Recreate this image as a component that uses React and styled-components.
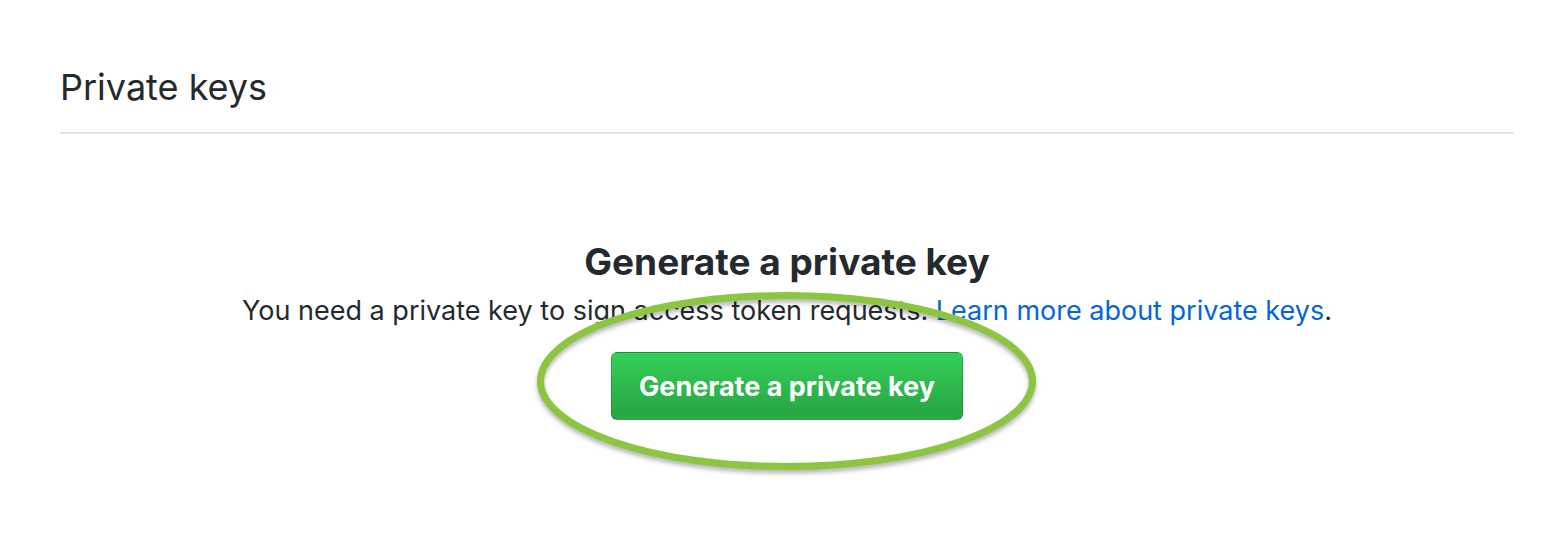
import styled, { createGlobalStyle } from "styled-components";

const GlobalStyle = createGlobalStyle`
  html, body {
    margin: 0;
    background: #fff;
    font-family: Inter, "Liberation Sans", Arial, sans-serif;
    color: #24292e;
  }
`;

function App() {
  return (
    <>
      <GlobalStyle />
      <Page>
        <Subhead>
          <SubheadTitle>Private keys</SubheadTitle>
        </Subhead>
        <Blankslate>
          <BlankTitle>Generate a private key</BlankTitle>
          <BlankText>
            You need a private key to sign access token requests.{" "}
            <Link href="#">Learn more about private keys</Link>.
          </BlankText>
          <ButtonWrap>
            <PrimaryButton type="button">Generate a private key</PrimaryButton>
            <Highlight viewBox="0 0 511 195" width="511" height="195">
              <defs>
                <filter id="ring-shadow" x="-5%" y="-10%" width="110%" height="125%">
                  <feGaussianBlur stdDeviation="2" />
                </filter>
              </defs>
              <ellipse
                cx="255.5"
                cy="92.5"
                rx="246"
                ry="85.5"
                fill="none"
                stroke="rgba(0,0,0,0.28)"
                strokeWidth="7"
                filter="url(#ring-shadow)"
              />
              <ellipse
                cx="255.5"
                cy="89"
                rx="246"
                ry="85.5"
                fill="none"
                stroke="#8cc540"
                strokeWidth="7"
              />
            </Highlight>
          </ButtonWrap>
        </Blankslate>
      </Page>
    </>
  );
}

export default App;

const Page = styled.div`
  min-height: 536px;
  padding: 0 50px 0 60px;
`;

const Subhead = styled.div`
  padding-top: 64px;
  padding-bottom: 22px;
  border-bottom: 2px solid #e1e4e8;
`;

const SubheadTitle = styled.h2`
  margin: 0;
  font-size: 36px;
  font-weight: 400;
  line-height: 46px;
  color: #24292e;
`;

const Blankslate = styled.div`
  display: flex;
  flex-direction: column;
  align-items: center;
  padding-top: 104px;
`;

const BlankTitle = styled.h3`
  margin: 0;
  font-size: 37px;
  font-weight: 700;
  line-height: 48px;
  color: #24292e;
`;

const BlankText = styled.p`
  margin: 6px 0 0;
  font-size: 27px;
  line-height: 38px;
  color: #24292e;
`;

const Link = styled.a`
  color: #0366d6;
  text-decoration: none;
`;

const ButtonWrap = styled.div`
  position: relative;
  margin-top: 22px;
`;

const PrimaryButton = styled.button`
  display: block;
  height: 68px;
  width: 352px;
  padding: 0;
  border: 1px solid rgba(27, 31, 35, 0.2);
  border-radius: 6px;
  background: linear-gradient(-180deg, #34d058 0%, #28a745 90%);
  color: #fff;
  font-family: Inter, "Liberation Sans", Arial, sans-serif;
  font-size: 27px;
  font-weight: 700;
  cursor: pointer;
`;

const Highlight = styled.svg`
  position: absolute;
  left: -80px;
  top: -60px;
  overflow: visible;
  pointer-events: none;
`;
